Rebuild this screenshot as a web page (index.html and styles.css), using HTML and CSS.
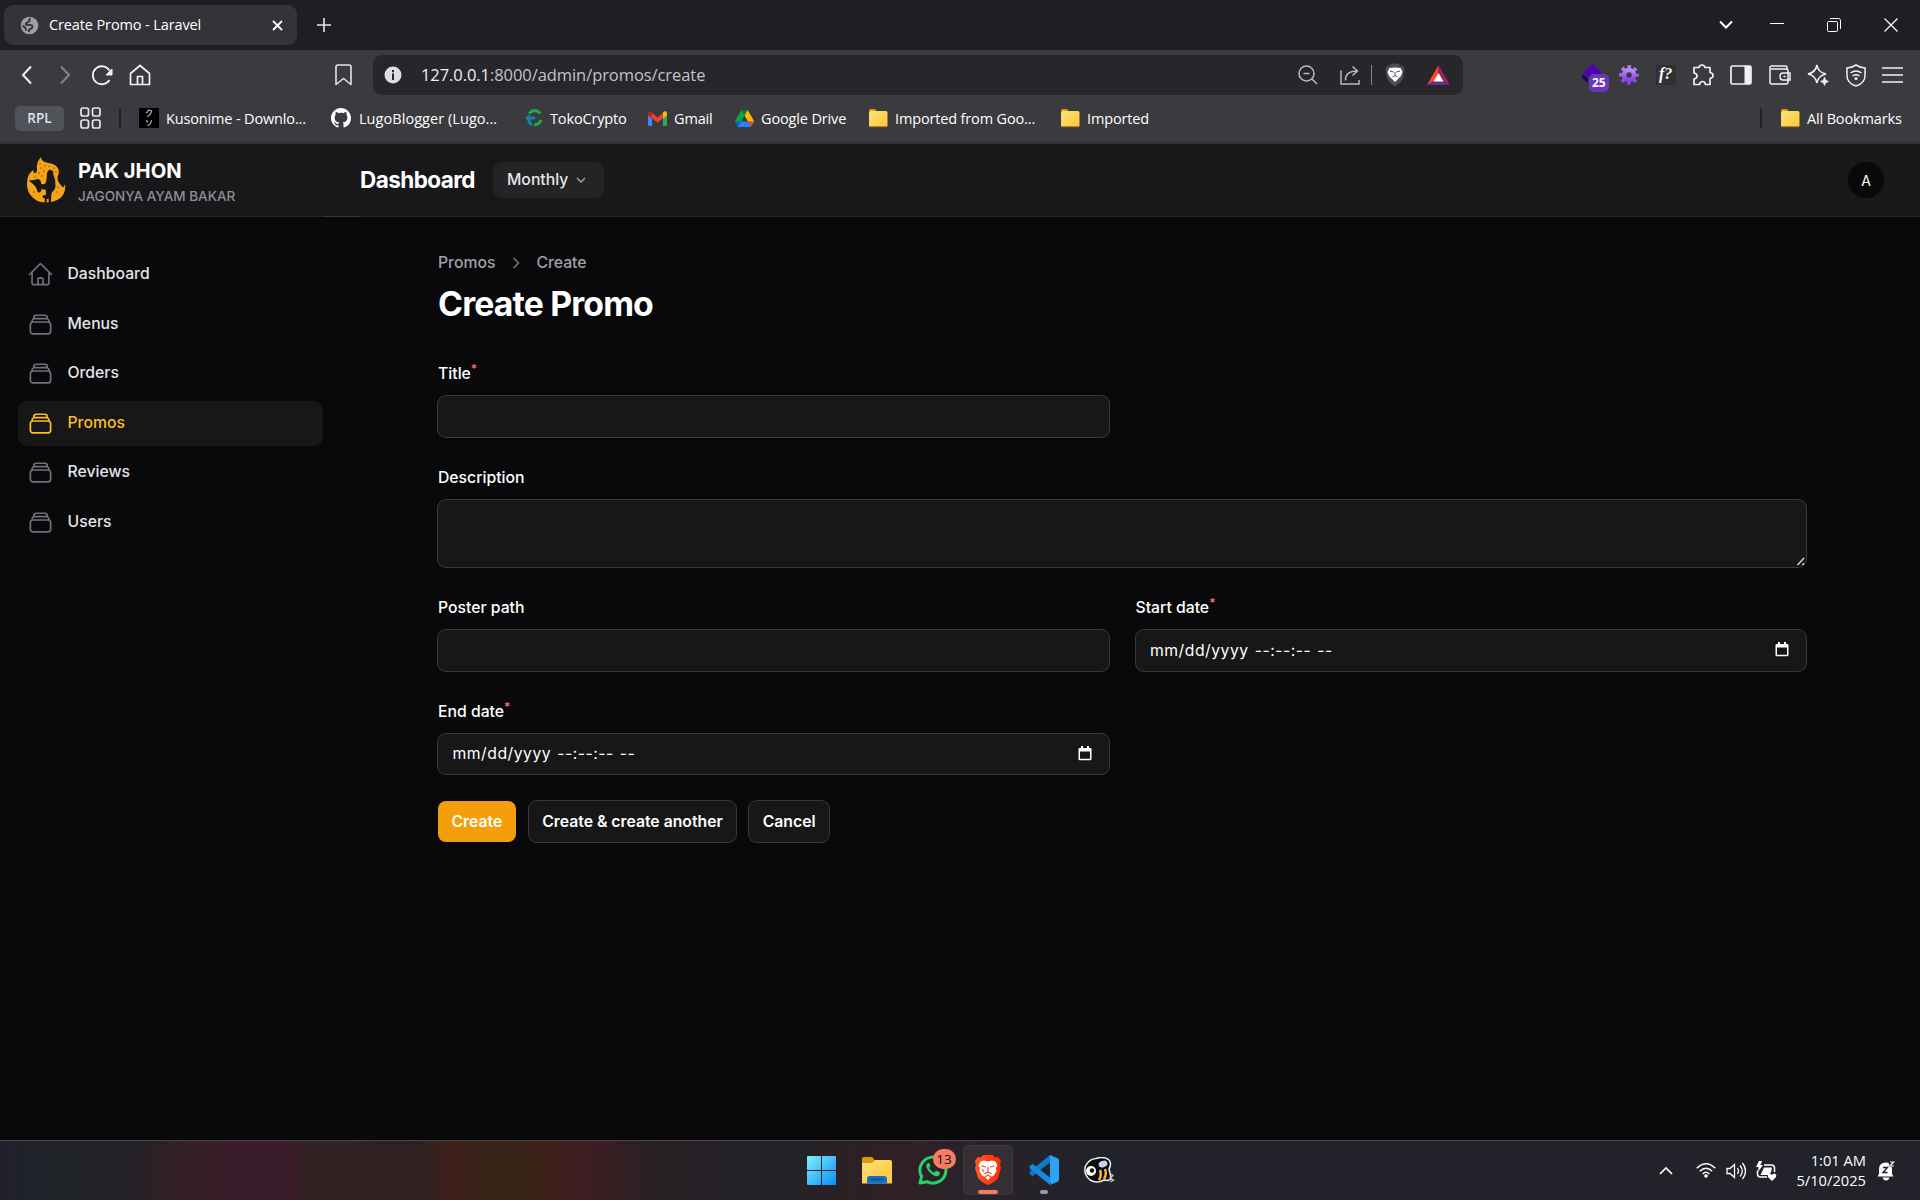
FILE: index.html
```html
<!DOCTYPE html>
<html lang="en">
<head>
<meta charset="utf-8">
<title>Create Promo - Laravel</title>
<link rel="stylesheet" href="styles.css">
</head>
<body>
<svg class="defs" width="0" height="0" aria-hidden="true">
  <defs>
    <linearGradient id="gfolder" x1="0" y1="0" x2="1" y2="1"><stop offset="0" stop-color="#ffe07a"/><stop offset="1" stop-color="#fcc633"/></linearGradient>
    <linearGradient id="gwin" x1="0" y1="0" x2="1" y2="1"><stop offset="0" stop-color="#7df0ff"/><stop offset="1" stop-color="#0a8cf5"/></linearGradient>
    <linearGradient id="ggear" x1="0" y1="0" x2="0" y2="1"><stop offset="0" stop-color="#b78cf2"/><stop offset="1" stop-color="#8b3ff0"/></linearGradient>
    <linearGradient id="gbrave" x1="0" y1="0" x2="1" y2="0"><stop offset="0" stop-color="#ff5a2a"/><stop offset="1" stop-color="#ff2a05"/></linearGradient>
  </defs>
  <symbol id="folder" viewBox="0 0 20 20"><path d="M1 2.5Q1 1 2.5 1H7l2 2.500H1z" fill="#d99a14"/><rect x="1" y="3" width="18.500" height="16" rx="1.500" fill="url(#gfolder)"/><path d="M1.500 18.700h17.500" stroke="#9b7a26" stroke-width="1"/></symbol>
  <symbol id="stack" viewBox="0 0 24 24"><path d="M6 6.878V6a2.250 2.250 0 0 1 2.250-2.250h7.500A2.250 2.250 0 0 1 18 6v.878m-12 0c.235-.083.487-.128.750-.128h10.500c.263 0 .515.045.750.128m-12 0A2.250 2.250 0 0 0 4.500 9v.878m13.500-3A2.250 2.250 0 0 1 19.500 9v.878m0 0a2.246 2.246 0 0 0-.750-.128H5.250c-.263 0-.515.045-.750.128m15 0A2.250 2.250 0 0 1 21 12v6a2.250 2.250 0 0 1-2.250 2.250H5.250A2.250 2.250 0 0 1 3 18v-6c0-.980.626-1.813 1.500-2.122"/></symbol>
  <symbol id="calendar" viewBox="0 0 14 16"><path d="M3 0h2v2h4V0h2v2h1.500Q13.500 2 13.500 3.200V13q0 1.300-1.300 1.300H1.800Q.5 14.300.5 13V3.200Q.5 2 1.700 2H3zM2 5.500v7.300h10V5.500z" fill="#fff"/></symbol>
  <symbol id="lion" viewBox="0 0 26 30"><path d="M5.500 6.500 9 5.500l4 1 4-1 3.500 1 2 4-1.500 2.500.5 3-2.500 4.500-3 1.500L13 25l-3-3-3-1.500L4.500 16l.5-3-1.500-2.500z" fill="#fff"/></symbol>
</svg>

<header class="tabs">
  <div class="tab">
    <svg class="globe" width="19" height="19" viewBox="0 0 19 19"><circle cx="9.500" cy="9.500" r="8.800" fill="#9aa0a6"/><path d="M10.500 2.500Q9 3 9.500 5L6 7.500q-1 1.500 1.500 1.500 5-.5 5 1.500 0 2-2.500 2.500-1 1-1.500 3M2.500 9.500 5 11.500l1.500 3" fill="none" stroke="#36353a" stroke-width="1.900"/></svg>
    <span class="tab-title">Create Promo - Laravel</span>
    <svg class="tab-close" width="11" height="11" viewBox="0 0 11 11"><path d="M1 1l9 9M10 1l-9 9" stroke="#fff" stroke-width="1.800"/></svg>
  </div>
  <svg width="14" height="14" viewBox="0 0 14 14"><path d="M7 0v14M0 7h14" stroke="#e6e6e8" stroke-width="1.600"/></svg>
  <div class="window-controls">
    <svg width="14" height="10" viewBox="0 0 14 10"><path d="M1 1.500l6 6 6-6" fill="none" stroke="#fff" stroke-width="2"/></svg>
    <svg width="14" height="14" viewBox="0 0 14 14"><path d="M0 5.500h14" stroke="#fff"/></svg>
    <svg width="14" height="14" viewBox="0 0 14 14"><rect x=".5" y="3.500" width="10" height="10" rx="1" fill="none" stroke="#fff"/><path d="M3 .5h8.500q2 0 2 2V11" fill="none" stroke="#fff"/></svg>
    <svg width="14" height="14" viewBox="0 0 14 14"><path d="M.5.5l13 13M13.500.5l-13 13" stroke="#fff" stroke-width="1.200"/></svg>
  </div>
</header>

<nav class="toolbar">
  <svg class="ic back" width="12" height="20" viewBox="0 0 12 20"><path d="M10 1.500 2 10l8 8.500" fill="none" stroke="#f2f2f4" stroke-width="2"/></svg>
  <svg class="ic fwd" width="12" height="20" viewBox="0 0 12 20"><path d="M2 1.500 10 10l-8 8.500" fill="none" stroke="#85858a" stroke-width="2"/></svg>
  <svg class="ic reload" width="22" height="22" viewBox="0 0 22 22"><path d="M18.500 6.500A9 9 0 1 0 18.500 16" fill="none" stroke="#f2f2f4" stroke-width="1.800"/><path d="M21 5v6h-6z" fill="#f2f2f4" stroke="#f2f2f4" stroke-linejoin="round"/></svg>
  <svg class="ic home" width="22" height="22" viewBox="0 0 22 22"><path d="M1.500 9.500 11 1.500l9.500 8V20.500h-19zM8.500 20V12.500h5V20" fill="none" stroke="#f2f2f4" stroke-width="1.700" stroke-linejoin="round"/></svg>
  <svg class="ic mark" width="17" height="22" viewBox="0 0 17 22"><path d="M3 1h11q2 0 2 2v17.500l-7.500-6-7.500 6V3q0-2 2-2z" fill="none" stroke="#e4e4e6" stroke-width="1.600" stroke-linejoin="round"/></svg>
  <div class="url">
    <svg width="18" height="18" viewBox="0 0 18 18"><circle cx="9" cy="9" r="8.500" fill="#dedde3"/><path d="M9 4v2.200M9 7.500V14" stroke="#27262b" stroke-width="2"/></svg>
    <span class="address"><b>127.0.0.1</b>:8000/admin/promos/create</span>
    <svg class="u1" width="20" height="20" viewBox="0 0 20 20"><circle cx="8.500" cy="8.500" r="7.500" fill="none" stroke="#b9b9bd" stroke-width="1.500"/><path d="M5.500 8.500h6M14 14l5 5" stroke="#b9b9bd" stroke-width="1.500"/></svg>
    <svg class="u2" width="20" height="20" viewBox="0 0 20 20"><path d="M1 5.500V19h18v-4M5.500 15.500q-.5-9 11-9.500M12.500 1.500 17.500 6l-5 4.500" fill="none" stroke="#b9b9bd" stroke-width="1.500"/></svg>
    <i class="sep"></i>
    <svg class="u3" width="20" height="24" viewBox="0 0 20 24"><path d="M5 2.500 7 .5h6l2 2 3 .5 1.500 3-1.500 9q-1 4-8 8.500-7-4.500-8-8.500L.5 6 2 3z" fill="#4c4c5e"/><path d="M4.500 5 10 4.500l5.500.5 2 4-1.500 4-2.500 2.500L10 19l-3.500-3.500L4 13 2.500 9z" fill="#fff"/><path d="M5 8l3.500 1M15 8l-3.500 1M7.500 14l2.500-1.500L12.500 14M10 9v3" stroke="#4c4c5e" stroke-width="1" fill="none"/></svg>
    <svg class="u4" width="23" height="20" viewBox="0 0 23 20"><path d="M11.500 0 0 20l11.500-6.500z" fill="#ff4724"/><path d="M11.500 0 23 20l-11.500-6.500z" fill="#9e1f63"/><path d="M0 20h23L11.500 13z" fill="#662d91"/><path d="M11.500 8 6.500 16.500h10z" fill="#fff"/></svg>
  </div>
  <div class="extensions">
    <span class="ext-purple"><svg width="22" height="22" viewBox="0 0 22 22"><path d="M11 0 21 8.500l-9 7-10-7z" fill="#4a04b5"/><path d="M1 10l6 4v5l-6-4.500z" fill="#22035c"/></svg><em>25</em></span>
    <svg class="gear" width="20" height="20" viewBox="0 0 20 20"><circle cx="10" cy="10" r="5" fill="none" stroke="url(#ggear)" stroke-width="4.500"/><circle cx="10" cy="10" r="8.300" fill="none" stroke="url(#ggear)" stroke-width="3" stroke-dasharray="3.500 3.020" stroke-dashoffset="1.750"/></svg>
    <span class="fx">f?</span>
    <svg width="22" height="22" viewBox="0 0 22 22"><path d="M2 3.500h5q.5-2.500 3-2.500t3 2.500h5V8.500q3 .5 3 3t-3 3v6h-4.500q-.5-3-3-3t-3 3H2v-5.500q3-.5 3-3t-3-3z" fill="none" stroke="#f2f2f4" stroke-width="1.700" stroke-linejoin="round"/></svg>
    <svg width="22" height="20" viewBox="0 0 22 20"><rect x="1" y="1" width="20" height="18" rx="1.500" fill="none" stroke="#f2f2f4" stroke-width="1.700"/><path d="M14.500 1h6v18h-6z" fill="#f2f2f4"/></svg>
    <svg width="22" height="20" viewBox="0 0 22 20"><path d="M18 4V2.500Q18 1 16.500 1H2.500Q1 1 1 3v14q0 2 2 2h14q2 0 2-2V6q0-2-2-2H2M21 8h-7q-3 0-3 3.500t3 3.500h7zM14.500 11.500h2" fill="none" stroke="#f2f2f4" stroke-width="1.500"/></svg>
    <svg width="22" height="22" viewBox="0 0 22 22"><path d="M10 1q1 7.500 9 9-8 1.500-9 9-1.500-7.500-9-9 7.500-1.500 9-9z" fill="none" stroke="#f2f2f4" stroke-width="1.600"/><path d="M17.500 13q.5 4 4 4.500-3.500.5-4 4-.5-3.500-4-4 3.500-.5 4-4.500z" fill="#f2f2f4" stroke="#f2f2f4" stroke-width=".7"/></svg>
    <svg width="20" height="23" viewBox="0 0 20 23"><path d="M10 1q4 2.500 9 3v8q0 7-9 10-9-3-9-10V4q5-.5 9-3z" fill="none" stroke="#f2f2f4" stroke-width="1.500"/><path d="M4.500 9q5.500-4 11 0M6.500 12q3.500-2.500 7 0" fill="none" stroke="#f2f2f4" stroke-width="1.500"/><circle cx="10" cy="14.500" r="1.600" fill="#f2f2f4"/></svg>
    <svg width="21" height="18" viewBox="0 0 21 18"><path d="M0 2h21M0 9h21M0 16h21" stroke="#f2f2f4" stroke-width="1.700"/></svg>
  </div>
</nav>

<nav class="bookmarks">
  <span class="group">RPL</span>
  <svg class="apps" width="21" height="22" viewBox="0 0 21 22"><g fill="none" stroke="#e8e8ea" stroke-width="1.700"><rect x="1" y="1" width="7.500" height="8" rx="2"/><rect x="12.500" y="1" width="7.500" height="8" rx="2"/><rect x="1" y="13" width="7.500" height="8" rx="2"/><rect x="12.500" y="13" width="7.500" height="8" rx="2"/></g></svg>
  <i class="bar"></i>
  <a class="bm w-kuso"><span class="kuso"><small>ク</small><small>ソ</small></span><span>Kusonime - Downlo...</span></a>
  <a class="bm w-git"><svg width="20" height="20" viewBox="0 0 16 16"><path fill="#fff" d="M8 0C3.580 0 0 3.580 0 8c0 3.540 2.290 6.530 5.470 7.590.4.070.55-.17.55-.38 0-.19-.01-.82-.01-1.490-2.010.37-2.530-.49-2.690-.94-.09-.23-.48-.94-.82-1.130-.28-.15-.68-.52-.01-.53.63-.01 1.080.58 1.230.82.72 1.210 1.870.87 2.330.66.070-.52.280-.87.510-1.070-1.780-.2-3.640-.89-3.640-3.950 0-.87.310-1.590.82-2.150-.08-.2-.36-1.020.08-2.120 0 0 .67-.21 2.200.82.640-.18 1.320-.27 2-.27s1.360.09 2 .27c1.530-1.040 2.200-.82 2.200-.82.440 1.100.160 1.920.080 2.120.510.560.820 1.270.820 2.150 0 3.070-1.870 3.750-3.650 3.950.290.250.540.730.540 1.480 0 1.070-.01 1.930-.01 2.200 0 .21.150.46.550.38A8.010 8.010 0 0 0 16 8c0-4.420-3.580-8-8-8z"/></svg><span>LugoBlogger (Lugo...</span></a>
  <a class="bm w-toko"><svg width="18" height="18" viewBox="0 0 18 18"><path d="M4 4.500Q8 0 13 2.500l2.500 2" fill="none" stroke="#1fa84c" stroke-width="3"/><path d="M16 11q-2 5-7 5" fill="none" stroke="#1fa84c" stroke-width="3"/><path d="M7 16Q2 13 5 8" fill="none" stroke="#1580a8" stroke-width="3"/><path d="M0 9l5-4v2.500h5v3H5V13z" fill="#1580a8"/></svg><span>TokoCrypto</span></a>
  <a class="bm w-gmail"><svg width="19" height="15" viewBox="0 0 19 15"><path d="M0 3h4v12H1.500Q0 15 0 13.500z" fill="#4285f4"/><path d="M15 3h4v10.500q0 1.500-1.500 1.500H15z" fill="#34a853"/><path d="M4 2l5.500 4.500L15 2v5.500L9.500 11.500 4 7.500z" fill="#ea4335"/><path d="M0 2.500Q0 0 2.200 0L4 1.500v6L0 4.500z" fill="#c5221f"/><path d="M19 2.500Q19 0 16.800 0L15 1.500v6l4-3z" fill="#fbbc04"/></svg><span>Gmail</span></a>
  <a class="bm w-drive"><svg width="19" height="17" viewBox="0 0 87.300 78"><path d="m6.600 66.850 3.850 6.650c.8 1.400 1.950 2.500 3.300 3.300l13.750-23.800h-27.500c0 1.550.4 3.100 1.200 4.500z" fill="#0066da"/><path d="m43.650 25-13.750-23.800c-1.350.8-2.500 1.900-3.300 3.300l-25.400 44a9.060 9.060 0 0 0 -1.200 4.500h27.500z" fill="#00ac47"/><path d="m73.550 76.800c1.350-.8 2.500-1.900 3.300-3.300l1.600-2.750 7.650-13.250c.8-1.400 1.200-2.950 1.200-4.500h-27.502l5.852 11.500z" fill="#ea4335"/><path d="m43.650 25 13.750-23.800c-1.350-.8-2.900-1.200-4.500-1.200h-18.500c-1.600 0-3.150.45-4.500 1.200z" fill="#00832d"/><path d="m59.800 53h-32.300l-13.750 23.800c1.350.8 2.900 1.200 4.500 1.200h50.800c1.600 0 3.150-.45 4.500-1.200z" fill="#2684fc"/><path d="m73.400 26.500-12.700-22c-.8-1.400-1.950-2.500-3.300-3.300l-13.750 23.800 16.150 28h27.450c0-1.550-.4-3.100-1.200-4.500z" fill="#ffba00"/></svg><span>Google Drive</span></a>
  <a class="bm w-imp1"><svg width="20" height="20"><use href="#folder"/></svg><span>Imported from Goo...</span></a>
  <a class="bm w-imp2"><svg width="20" height="20"><use href="#folder"/></svg><span>Imported</span></a>
  <i class="bar bar-end"></i>
  <a class="bm w-all"><svg width="20" height="20"><use href="#folder"/></svg><span>All Bookmarks</span></a>
</nav>

<header class="topbar">
  <div class="brand">
    <svg width="39" height="46" viewBox="0 0 39 46"><path d="M14 0q0 3.500 4 5 3 1 6 1.500 6 1.500 7.500 6 .8 3-.5 6-1.500 4 1.500 8 2 2.500 3.500 4 1.500-1 2-3.500 1 6-2 11Q32 44.500 20 45.500 9 46 3.500 38-1 32 .3 23q.7-6 5.700-10 0 2 2 3.500 2.500-1.500 2-5Q9 6 14 0z" fill="#f6a316"/><path d="M20 15.500l2.500-3 3.500 1.500.5 4Q29 23 28.500 29q-.3 4-3.500 6-1 3-1 11h-2.300v-4h-2v4h-2v-5h-2v-3l3-1v-4l-4-1q-1 5-4 3-1.500-6-6-9-2.500-1.500-2.500-3 5 .500 9-1 3 1 3 5 3 1 4.500-1Q20 22 20 15.500z" fill="#18181b"/><path d="M14.500 34.500q3-2.500 3.500 0v3h-3.500z" fill="none" stroke="#f6a316" stroke-width="1.400"/><g fill="#6b4a12"><circle cx="13" cy="7" r=".7"/><circle cx="14" cy="11" r=".7"/><circle cx="18" cy="9" r=".7"/><circle cx="12" cy="16" r=".8"/><circle cx="17" cy="14" r=".7"/><circle cx="22" cy="9.500" r=".7"/><circle cx="27" cy="11" r=".7"/><circle cx="29" cy="15" r=".7"/><circle cx="8" cy="20" r=".7"/><circle cx="15" cy="19" r=".7"/><circle cx="31" cy="30" r=".7"/><circle cx="30" cy="35" r=".7"/><circle cx="7" cy="35" r=".7"/></g></svg>
    <div class="brand-text"><strong>PAK JHON</strong><span>JAGONYA AYAM BAKAR</span></div>
  </div>
  <h2>Dashboard</h2>
  <button class="period">Monthly<svg width="10" height="6" viewBox="0 0 10 6"><path d="M1 1l4 4 4-4" fill="none" stroke="#a1a1aa" stroke-width="1.400"/></svg></button>
  <span class="avatar">A</span>
  <i class="edge"></i>
</header>

<div class="app">
  <aside class="sidebar">
    <a><svg viewBox="0 0 24 24"><path d="m2.250 12 8.954-8.955a1.126 1.126 0 0 1 1.591 0L21.750 12M4.500 9.750v10.125c0 .621.504 1.125 1.125 1.125H9.750v-4.875c0-.621.504-1.125 1.125-1.125h2.250c.621 0 1.125.504 1.125 1.125V21h4.125c.621 0 1.125-.504 1.125-1.125V9.750M8.250 21h8.250"/></svg><span>Dashboard</span></a>
    <a><svg><use href="#stack"/></svg><span>Menus</span></a>
    <a><svg><use href="#stack"/></svg><span>Orders</span></a>
    <a class="active"><svg><use href="#stack"/></svg><span>Promos</span></a>
    <a><svg><use href="#stack"/></svg><span>Reviews</span></a>
    <a><svg><use href="#stack"/></svg><span>Users</span></a>
  </aside>
  <main>
    <div class="crumbs"><span>Promos</span><svg width="8" height="12" viewBox="0 0 8 12"><path d="M1.500 1l5 5-5 5" fill="none" stroke="#71717a" stroke-width="1.700"/></svg><span>Create</span></div>
    <h1>Create Promo</h1>
    <form>
      <div class="field half"><label>Title<sup>*</sup></label><div class="input"></div></div>
      <div class="field wide"><label>Description</label><div class="input area"><svg width="9" height="9" viewBox="0 0 9 9"><path d="M1.500 8 8 1M6.300 8 8 6.300" stroke="#d4d4d4" stroke-width="1.500"/></svg></div></div>
      <div class="field"><label>Poster path</label><div class="input"></div></div>
      <div class="field"><label>Start date<sup>*</sup></label><div class="input date"><span>mm/dd/yyyy</span><span>--:--:--</span><span>--</span><svg width="14" height="16"><use href="#calendar"/></svg></div></div>
      <div class="field"><label>End date<sup>*</sup></label><div class="input date"><span>mm/dd/yyyy</span><span>--:--:--</span><span>--</span><svg width="14" height="16"><use href="#calendar"/></svg></div></div>
    </form>
    <div class="actions"><button class="primary">Create</button><button>Create &amp; create another</button><button>Cancel</button></div>
  </main>
</div>

<footer class="taskbar">
  <div class="pinned">
    <span class="app-ic"><svg width="29" height="29" viewBox="0 0 29 29"><path d="M0 1q0-1 1-1h13v14H0zM15 0h13q1 0 1 1v13H15zM0 15h14v14H1q-1 0-1-1zM15 15h14v13q0 1-1 1H15z" fill="url(#gwin)"/></svg></span>
    <span class="app-ic"><svg width="30" height="27" viewBox="0 0 30 27"><path d="M0 2q0-2 2-2h8l3 3.500V8H0z" fill="#dc9a06"/><path d="M0 6h10l3-3h15q2 0 2 2v21.500H0z" fill="url(#gfolder)"/><path d="M5 26.500V22q0-3 3-3h14q3 0 3 3v4.500z" fill="#1272c9"/><path d="M9 22.500h12" stroke="#0b4a8c" stroke-width="1.300" stroke-linecap="round"/></svg></span>
    <span class="app-ic"><svg width="30" height="30" viewBox="0 0 30 30"><path d="M2 28 3.600 21.500A13 13 0 1 1 9 26.700z" fill="none" stroke="#25d366" stroke-width="3" stroke-linejoin="round"/><path d="M10 8q-3 1.500-1 5.500 3 5.500 8 7.500 4 1 5-2.500l-.3-1.200-3.700-1.800-2 2.200q-3-1-5-5l1.500-1.700L11.200 8z" fill="#25d366"/></svg><em>13</em></span>
    <span class="app-ic current"><svg width="26" height="30" viewBox="0 0 26 30"><path d="m8 0-2 2.500L3 2 0 6l1 4-1 3 3 10q3 4 10 7 7-3 10-7l3-10-1-3 1-4-3-4-3 .5L18 0z" fill="url(#gbrave)"/><use href="#lion" width="26" height="30"/><path d="M6.500 11 11 12M19.500 11 15 12M13 12v4.500M9.500 19l3.500-2 3.500 2M10 22l3-2 3 2M7 14l2 3" stroke="#ff4420" stroke-width="1.200" fill="none"/></svg></span>
    <span class="app-ic running"><svg width="30" height="30" viewBox="0 0 30 30"><path d="M21 7.500 3.500 21.200.7 19v-2.500L21 0z" fill="#0a7ac9"/><path d="M21 22.500 3.500 8.700.7 11v2.500L21 30z" fill="#1589dd"/><path d="M21 0l8 3.500q1 .5 1 1.700v19.600q0 1.200-1 1.700L21 30q1.500-1 0-3z" fill="#2ba4f3"/></svg></span>
    <span class="app-ic"><svg width="31" height="27" viewBox="0 0 31 27"><path d="M12 1.500Q20-1 25 3q3 4 0 9l1 4 1 6-3 1.500-4-.5Q13 27 6 23-1 17 1.500 9 5 2 12 1.500z" fill="#0c0c0e" stroke="#eee" stroke-width="1.500"/><circle cx="7" cy="14" r="5" fill="#fff"/><circle cx="8" cy="13.500" r="2.200" fill="#111"/><ellipse cx="19" cy="7" rx="4.500" ry="3.200" fill="#c6d4f2" transform="rotate(-20 19 7)"/><path d="M16 13q2 5-1 10M21 12q2 5-1 10" stroke="#f5b82e" stroke-width="2.500" fill="none"/><path d="M26 16.500l3 2-3 2.500 3.500 2-3 2" stroke="#ccc" stroke-width="1.300" fill="none"/></svg></span>
  </div>
  <div class="tray">
    <svg class="t1" width="14" height="9" viewBox="0 0 14 9"><path d="M1 8l6-6 6 6" fill="none" stroke="#fff" stroke-width="1.700"/></svg>
    <svg class="t2" width="20" height="15" viewBox="0 0 20 15"><path d="M.7 5.300q9.300-9 18.600 0M3.800 8.200q6.200-6 12.400 0M6.700 11q3.300-3.300 6.600 0" fill="none" stroke="#fff" stroke-width="1.500"/><circle cx="10" cy="13" r="1.800" fill="#fff"/></svg>
    <svg class="t3" width="20" height="18" viewBox="0 0 20 18"><path d="M1 6.500h3l4.500-4v13L4 11.500H1zM11.500 6q2 3 0 6M14 3.500q4.500 5.500 0 11M16.500 1q6 8 0 16" fill="none" stroke="#fff" stroke-width="1.300"/></svg>
    <svg class="t4" width="21" height="20" viewBox="0 0 21 20"><path d="M8 4h7.500Q18.500 4 18.500 7v4M1.500 9.500V13q0 3 3 3H11" fill="none" stroke="#fff" stroke-width="1.500"/><path d="M3 0 0 6h2.500L2 11l5-7H4.500L6 0zM8 6.500h8l-1 5-3 2.500H4.500z" fill="#fff"/><path d="M16 20l-4-4q-1-3 1.500-3.500 1.500 0 2.500 1.500 1-1.500 2.500-1.500Q21 13 20 16z" fill="#fff"/></svg>
    <div class="clock"><span>1:01 AM</span><span>5/10/2025</span></div>
    <svg class="t5" width="18" height="20" viewBox="0 0 18 20"><path d="M2 13V8q0-6.500 7-6.500 6 0 6 6.500v5l1.500 2.500H.5zM5.500 16.500h7q-1 3-3.500 3t-3.500-3z" fill="#fff"/><path d="M6 6.500h4.500L6 11.500h4.500" stroke="#22222a" stroke-width="1.400" fill="none"/><path d="M11.500 0H18v6h-5.500z" fill="#22222a"/><path d="M13 1h3.800L13 5h3.800" stroke="#fff" stroke-width="1.200" fill="none"/></svg>
  </div>
</footer>
</body>
</html>
```
FILE: styles.css
```css
* { box-sizing: border-box; }
body { margin: 0; width: 1920px; height: 1200px; overflow: hidden; display: flex; flex-direction: column; background: #09090b; color: #fff; font-family: Inter, sans-serif; font-size: 15.75px; }
.defs { position: absolute; }
svg { flex: none; display: block; }
button { font: inherit; color: inherit; border: 0; padding: 0; margin: 0; }
.tabs, .toolbar, .bookmarks, .taskbar { font-family: "Open Sans", "Noto Sans CJK JP", sans-serif; }

.tabs { height: 50px; flex: none; background: #1f1e23; display: flex; align-items: center; padding-left: 4px; }
.tab { width: 293px; height: 40px; border-radius: 9px; background: #343338; display: flex; align-items: center; padding: 0 14px 0 16px; margin-right: 20px; }
.tab-title { margin-left: 10px; font-size: 14.5px; letter-spacing: -.12px; margin-top: -1px; white-space: nowrap; }
.tab-close { margin-left: auto; }
.window-controls { margin-left: auto; display: flex; align-items: center; gap: 43px; padding-right: 22px; }
.window-controls svg:first-child { margin-right: -6px; }

.toolbar { height: 50px; flex: none; background: #3b3a3f; display: flex; align-items: center; padding-left: 21px; }
.fwd { margin-left: 26px; }
.reload { margin-left: 20px; }
.home { margin-left: 16px; }
.mark { margin-left: 184px; }
.url { width: 1090px; height: 40px; margin-left: 21px; border-radius: 9px; background: #27262b; display: flex; align-items: center; padding-left: 11px; }
.address { width: 896px; padding-left: 19px; font-size: 16.5px; letter-spacing: -.07px; margin-top: -2px; color: #c3c3c7; white-space: nowrap; }
.address b { font-weight: 400; color: #f0f0f2; }
.u2 { margin-left: 22px; }
.sep { width: 1px; height: 20px; margin-left: 11px; background: #85858a; }
.u3 { margin-left: 13px; }
.u4 { margin-left: 22px; }
.extensions { margin-left: auto; padding-right: 17px; display: flex; align-items: center; gap: 16.400px; }
.ext-purple { position: relative; width: 22px; height: 22px; }
.ext-purple em { position: absolute; left: 8px; top: 10px; width: 20px; height: 18px; border-radius: 5px; background: #6b35bd; font: 700 12px/18px "Open Sans", sans-serif; text-align: center; }
.fx { width: 20px; height: 20px; background: #303030; font: italic 700 16px/18px "Liberation Serif", serif; text-align: center; }

.bookmarks { height: 44px; flex: none; background: #3b3a3f; border-bottom: 2px solid #313136; display: flex; align-items: center; padding: 0 18px 6px 15px; font-size: 14.500px; }
.group { width: 49px; height: 25px; border-radius: 5px; background: #505357; color: #dbe5f2; font-size: 13.500px; line-height: 25px; text-align: center; font-weight: 600; }
.apps { margin-left: 16px; }
.bar { width: 2px; height: 20px; margin: 0 18px; background: #222126; }
.bm { display: flex; align-items: center; white-space: nowrap; flex: none; }
.bm span:last-child { margin-left: 7px; letter-spacing: -.15px; }
.w-git span:last-child { margin-left: 8px; letter-spacing: .05px; }
.kuso { width: 20px; height: 20px; background: #000; display: flex; flex-direction: column; align-items: center; }
.kuso small { font-size: 8px; line-height: 10px; }
.w-kuso { width: 192px; }
.w-git { width: 194px; }
.w-toko { width: 123px; }
.w-gmail { width: 87px; }
.w-drive { width: 133px; }
.w-imp1 { width: 192px; }
.bar-end { margin-left: auto; }
.w-all { width: 122px; }

.topbar { height: 73px; flex: none; position: relative; background: #18181b; border-bottom: 1px solid #242427; display: flex; align-items: center; padding: 0 36px 0 27px; }
.brand { width: 333px; display: flex; align-items: center; gap: 12px; }
.brand-text { display: flex; flex-direction: column; margin-top: 6px; }
.brand-text strong { font-size: 20.200px; line-height: 26px; font-weight: 700; }
.brand-text span { font-size: 13.500px; line-height: 24px; font-weight: 500; color: #8e8e97; }
h2 { margin: -1px 18px 0 0; font-size: 22.500px; font-weight: 700; letter-spacing: -.56px; width: 115px; }
.period { width: 111px; height: 36px; border-radius: 9px; background: #242427; color: #e4e4e7; font-weight: 500; display: flex; align-items: center; padding: 0 0 1px 14px; gap: 8px; }
.avatar { margin-left: auto; width: 36px; height: 36px; border-radius: 50%; background: #09090b; font-size: 14px; line-height: 37px; text-align: center; }
.edge { position: absolute; left: 324px; bottom: -1px; width: 36px; height: 1px; background: #37373a; }

.app { flex: 1; display: flex; }
.sidebar { width: 324px; flex: none; padding: 35px 0 0 18px; display: flex; flex-direction: column; gap: 4.500px; }
.sidebar a { height: 45px; width: 305px; border-radius: 9px; padding: 0 9px; display: flex; align-items: center; gap: 13.500px; font-weight: 500; color: #e4e4e7; }
.sidebar svg { width: 27px; height: 27px; fill: none; stroke: #71717a; stroke-width: 1.500; stroke-linecap: round; stroke-linejoin: round; }
.sidebar .active { background: #171717; color: #fbbf24; }
.sidebar .active svg { stroke: #fbbf24; }
.sidebar span { margin-top: -2px; }

main { width: 1368px; margin: 35px auto 0; }
.crumbs { height: 22.500px; display: flex; align-items: center; font-weight: 500; color: #a1a1aa; line-height: 22.500px; }
.crumbs svg { margin: 0 16px 0 17px; }
h1 { margin: 9px 0 36px; font-size: 33.750px; line-height: 40.500px; font-weight: 700; letter-spacing: -.84px; }
form { display: grid; grid-template-columns: 1fr 1fr; gap: 27px; }
.field { display: flex; flex-direction: column; gap: 9px; }
.half { margin-right: 697.500px; grid-column: 1 / 3; }
.wide { grid-column: 1 / 3; }
label { height: 27px; line-height: 27px; font-weight: 500; }
sup { font-size: 11.800px; line-height: 0; color: #f87171; vertical-align: baseline; position: relative; top: -.5em; font-weight: 600; }
.input { height: 40.500px; border-radius: 8px; background: #171717; box-shadow: 0 0 0 1px #39393b; }
.area { height: 67.500px; display: flex; align-items: flex-end; justify-content: flex-end; padding: 0 1px 1px 0; }
.date { display: flex; align-items: center; padding: 0 17px 0 14.500px; gap: 6px; letter-spacing: .5px; }
.date svg { margin-left: auto; }
.actions { display: flex; gap: 13px; margin-top: 27px; }
.actions button { height: 40.500px; padding: 0 13.500px; border-radius: 8px; background: #171717; box-shadow: 0 0 0 1px #39393b; font-weight: 600; }
.actions .primary { background: #f59e0b; box-shadow: none; }

.taskbar { height: 60px; flex: none; border-top: 1px solid #47454a; display: flex; justify-content: space-between; padding-left: 796.500px; background: linear-gradient(90deg, #20212c 0, #212429 70px, #242329 130px, #302024 165px, #3b1c2b 240px, #3b1c2a 290px, #302122 310px, #2f2122 420px, #3d2018 450px, #372518 490px, #3a2317 530px, #42201a 550px, #3d1d23 590px, #302023 625px, #272226 680px, #232229 790px, #2b2125 840px, #302026 900px, #28232b 980px, #22222a 1100px); }
.pinned { display: flex; align-items: center; gap: 5.500px; }
.app-ic { position: relative; width: 50px; height: 50px; display: flex; align-items: center; justify-content: center; margin-top: -1px; border-radius: 6px; }
.app-ic em { position: absolute; left: 25px; top: 4px; width: 23px; height: 20px; border-radius: 10px; background: #f77c62; color: #111; font: 400 13.500px/20px "Open Sans", sans-serif; text-align: center; }
.current { background: #352f35; box-shadow: inset 0 0 0 1px #403a41; }
.current::after, .running::after { content: ""; position: absolute; bottom: 1px; width: 20px; height: 4px; border-radius: 2px; background: #f77c62; }
.running::after { width: 8px; background: #9a999e; }
.tray { display: flex; align-items: center; padding-right: 25px; }
.t2 { margin-left: 23px; }
.t3 { margin-left: 10px; }
.t4 { margin-left: 10px; }
.clock { width: 89px; display: flex; flex-direction: column; align-items: flex-end; font-size: 14.700px; line-height: 20px; letter-spacing: 0; white-space: nowrap; margin-top: -2px; }
.t5 { margin-left: 11px; }
```
